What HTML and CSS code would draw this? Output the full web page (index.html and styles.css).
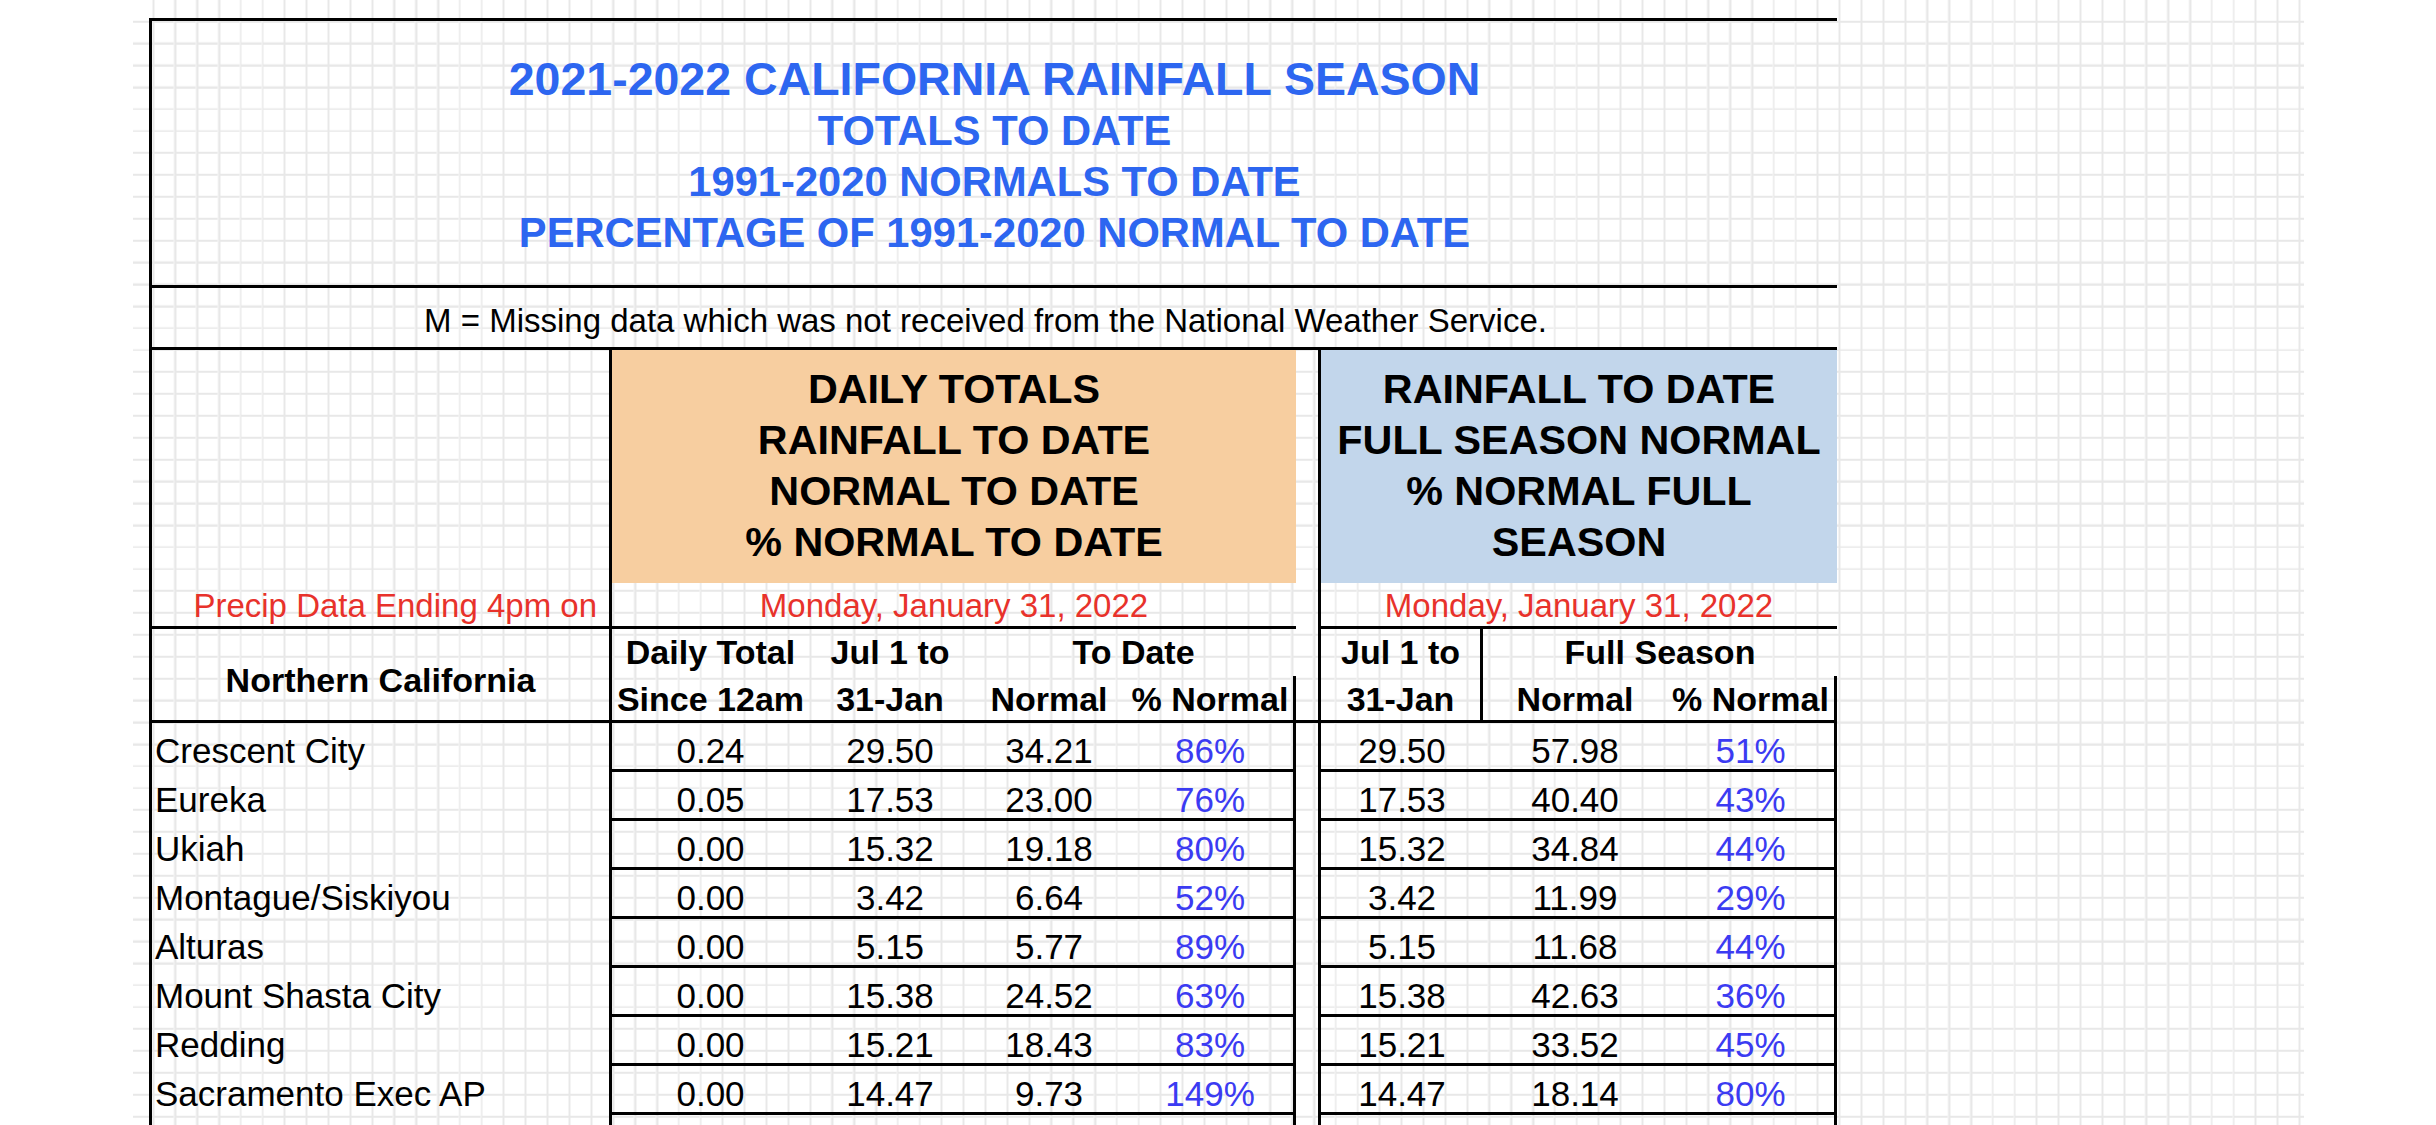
FILE: index.html
```html
<!DOCTYPE html>
<html lang="en">
<head>
<meta charset="utf-8">
<title>2021-2022 California Rainfall Season</title>
<link rel="stylesheet" href="styles.css">
</head>
<body>
<div class="sheet">
  <div class="report">
    <header class="title">
      <div class="t1">2021-2022 CALIFORNIA RAINFALL SEASON</div>
      <div class="t2">TOTALS TO DATE</div>
      <div class="t2">1991-2020 NORMALS TO DATE</div>
      <div class="t2">PERCENTAGE OF 1991-2020 NORMAL TO DATE</div>
    </header>
    <div class="note">M = Missing data which was not received from the National Weather Service.</div>

    <div class="row band">
      <div class="name-cell"><span class="precip">Precip Data Ending 4pm on</span></div>
      <div class="sec sec-daily">
        <div class="box orange">DAILY TOTALS<br>RAINFALL TO DATE<br>NORMAL TO DATE<br>% NORMAL TO DATE</div>
        <div class="date">Monday, January 31, 2022</div>
      </div>
      <div class="gap"></div>
      <div class="sec sec-season">
        <div class="box blue">RAINFALL TO DATE<br>FULL SEASON NORMAL<br>% NORMAL FULL<br>SEASON</div>
        <div class="date">Monday, January 31, 2022</div>
      </div>
    </div>

    <div class="row colhead">
      <div class="region">Northern California</div>
      <div class="h2 bl"><span>Daily Total</span><span>Since 12am</span></div>
      <div class="h2"><span>Jul 1 to</span><span>31-Jan</span></div>
      <div class="span2">
        <span class="span-top">To Date</span>
        <div class="pair pair-cd"><span>Normal</span><span class="br">% Normal</span></div>
      </div>
      <div class="gap"></div>
      <div class="h2 bl br"><span>Jul 1 to</span><span>31-Jan</span></div>
      <div class="span2">
        <span class="span-top">Full Season</span>
        <div class="pair pair-fg"><span>Normal</span><span class="br">% Normal</span></div>
      </div>
    </div>

    <div class="row data">
      <div class="name">Crescent City</div>
      <div class="v bl">0.24</div><div class="v">29.50</div><div class="v">34.21</div><div class="v pct br">86%</div>
      <div class="gap"></div>
      <div class="v bl">29.50</div><div class="v">57.98</div><div class="v pct br">51%</div>
    </div>
    <div class="row data">
      <div class="name">Eureka</div>
      <div class="v bl">0.05</div><div class="v">17.53</div><div class="v">23.00</div><div class="v pct br">76%</div>
      <div class="gap"></div>
      <div class="v bl">17.53</div><div class="v">40.40</div><div class="v pct br">43%</div>
    </div>
    <div class="row data">
      <div class="name">Ukiah</div>
      <div class="v bl">0.00</div><div class="v">15.32</div><div class="v">19.18</div><div class="v pct br">80%</div>
      <div class="gap"></div>
      <div class="v bl">15.32</div><div class="v">34.84</div><div class="v pct br">44%</div>
    </div>
    <div class="row data">
      <div class="name">Montague/Siskiyou</div>
      <div class="v bl">0.00</div><div class="v">3.42</div><div class="v">6.64</div><div class="v pct br">52%</div>
      <div class="gap"></div>
      <div class="v bl">3.42</div><div class="v">11.99</div><div class="v pct br">29%</div>
    </div>
    <div class="row data">
      <div class="name">Alturas</div>
      <div class="v bl">0.00</div><div class="v">5.15</div><div class="v">5.77</div><div class="v pct br">89%</div>
      <div class="gap"></div>
      <div class="v bl">5.15</div><div class="v">11.68</div><div class="v pct br">44%</div>
    </div>
    <div class="row data">
      <div class="name">Mount Shasta City</div>
      <div class="v bl">0.00</div><div class="v">15.38</div><div class="v">24.52</div><div class="v pct br">63%</div>
      <div class="gap"></div>
      <div class="v bl">15.38</div><div class="v">42.63</div><div class="v pct br">36%</div>
    </div>
    <div class="row data">
      <div class="name">Redding</div>
      <div class="v bl">0.00</div><div class="v">15.21</div><div class="v">18.43</div><div class="v pct br">83%</div>
      <div class="gap"></div>
      <div class="v bl">15.21</div><div class="v">33.52</div><div class="v pct br">45%</div>
    </div>
    <div class="row data">
      <div class="name">Sacramento Exec AP</div>
      <div class="v bl">0.00</div><div class="v">14.47</div><div class="v">9.73</div><div class="v pct br">149%</div>
      <div class="gap"></div>
      <div class="v bl">14.47</div><div class="v">18.14</div><div class="v pct br">80%</div>
    </div>
    <div class="row data">
      <div class="name"></div>
      <div class="v bl"></div><div class="v"></div><div class="v"></div><div class="v pct br"></div>
      <div class="gap"></div>
      <div class="v bl"></div><div class="v"></div><div class="v pct br"></div>
    </div>
  </div>
</div>
</body>
</html>
```

FILE: styles.css
```css
* {
  box-sizing: border-box;
}

html,
body {
  margin: 0;
  padding: 0;
  overflow: hidden;
  background: #ffffff;
}

body {
  width: 2436px;
  height: 1125px;
  font-family: "Liberation Sans", Arial, Helvetica, sans-serif;
  color: #000000;
}

/* spreadsheet canvas with light cell grid */
.sheet {
  margin-left: 133px;
  width: 2171px;
  height: 1125px;
  padding-top: 18px;
  padding-left: 16px;
  background-color: #ffffff;
  background-image:
    repeating-linear-gradient(90deg, transparent 0 19.6px, #f4f4f4 19.6px 20.1px, #e8e8e8 20.1px 21.9px),
    repeating-linear-gradient(180deg, transparent 0 19.6px, #f4f4f4 19.6px 20.1px, #e8e8e8 20.1px 21.9px);
  background-position: -0.5px 0.8px;
}

.report {
  width: 1688px;
  border-top: 3px solid #000;
  border-left: 3px solid #000;
}

/* title block */
.title {
  height: 267px;
  padding-top: 33px;
  border-bottom: 3px solid #000;
  text-align: center;
  color: #2d66f0;
  font-weight: bold;
}

.title div {
  line-height: 51px;
  white-space: nowrap;
}

.t1 {
  font-size: 46.5px;
}

.t2 {
  font-size: 41.7px;
}

.note {
  height: 62px;
  padding-top: 6px;
  padding-right: 18px;
  border-bottom: 3px solid #000;
  font-size: 33px;
  line-height: 53px;
  text-align: center;
  white-space: nowrap;
}

/* shared column grid */
.row {
  display: grid;
  grid-template-columns: 457px 200px 162px 156px 169px 22px 165px 184px 170px;
}

.bl {
  border-left: 3px solid #000;
}

.br {
  border-right: 3px solid #000;
}

/* header band with coloured boxes */
.band {
  height: 279px;
}

.name-cell {
  display: flex;
  flex-direction: column;
  justify-content: flex-end;
  align-items: flex-end;
  padding-right: 12px;
  border-bottom: 3px solid #000;
}

.precip,
.date {
  height: 43px;
  padding-top: 3px;
  font-size: 33px;
  line-height: 40px;
  color: #e8322b;
  white-space: nowrap;
}

.sec {
  display: flex;
  flex-direction: column;
  border-left: 3px solid #000;
  border-bottom: 3px solid #000;
}

.sec-daily {
  grid-column: 2 / 6;
}

.sec-season {
  grid-column: 7 / 10;
}

.box {
  height: 233px;
  padding-top: 14px;
  font-size: 41.3px;
  font-weight: bold;
  line-height: 51px;
  text-align: center;
  white-space: nowrap;
}

.orange {
  background: #f7cea0;
}

.blue {
  background: #c2d6eb;
}

.date {
  text-align: center;
}

/* column headings */
.colhead {
  height: 94px;
  border-bottom: 3px solid #000;
  font-size: 34px;
  font-weight: bold;
}

.region {
  display: flex;
  align-items: center;
  justify-content: center;
  padding-top: 7px;
  line-height: 38px;
  white-space: nowrap;
}

.h2 {
  display: flex;
  flex-direction: column;
  align-items: center;
  line-height: 47px;
  white-space: nowrap;
}

.span2 {
  grid-column: span 2;
  display: flex;
  flex-direction: column;
}

.span-top {
  height: 47px;
  line-height: 47px;
  text-align: center;
  white-space: nowrap;
}

.pair {
  display: grid;
  height: 44px;
}

.pair-cd {
  grid-template-columns: 156px 169px;
}

.pair-fg {
  grid-template-columns: 184px 170px;
}

.pair span {
  line-height: 47px;
  text-align: center;
  white-space: nowrap;
}

/* data rows */
.data {
  height: 49px;
  font-size: 35px;
}

.name {
  padding-left: 3px;
  padding-top: 9px;
  line-height: 37px;
  white-space: nowrap;
}

.v {
  padding-top: 9px;
  line-height: 37px;
  text-align: center;
  white-space: nowrap;
  border-bottom: 3px solid #000;
}

.pct {
  color: #3b3bf2;
}
```
